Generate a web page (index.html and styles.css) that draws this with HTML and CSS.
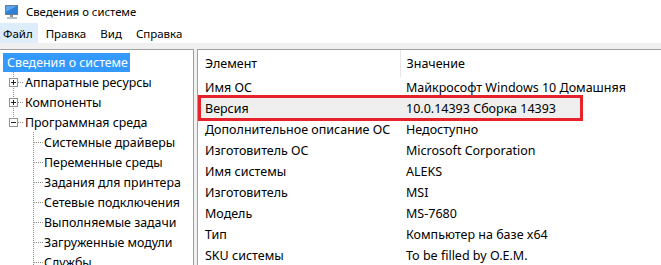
FILE: index.html
```html
<!DOCTYPE html>
<html lang="ru">
<head>
    <meta charset="UTF-8">
    <title>Сведения о системе</title>
    <link rel="stylesheet" href="styles.css">
</head>
<body>
    <div class="titlebar">
        <svg class="app-icon" width="16" height="16" viewBox="0 0 16 16">
            <rect x="1" y="1" width="13" height="10" fill="#6b7a8c"/>
            <rect x="2" y="2" width="11" height="8" fill="#2f7fd8"/>
            <path d="M2 2h11L2 8z" fill="#5aa7f0"/>
            <rect x="6" y="11" width="3" height="2" fill="#8c959f"/>
            <rect x="3" y="13" width="10" height="2" fill="#b7bec6"/>
        </svg>
        <span class="title">Сведения о системе</span>
    </div>

    <div class="menubar">
        <span class="menu active">Файл</span>
        <span class="menu">Правка</span>
        <span class="menu">Вид</span>
        <span class="menu">Справка</span>
    </div>

    <div class="main">
        <div class="tree">
            <div class="node root"><span class="sel">Сведения о системе</span></div>

            <div class="node">
                <span class="gut mid"><span class="box plus"></span></span>
                <span class="label">Аппаратные ресурсы</span>
            </div>
            <div class="node">
                <span class="gut mid"><span class="box plus"></span></span>
                <span class="label">Компоненты</span>
            </div>
            <div class="node">
                <span class="gut last"><span class="box minus"></span></span>
                <span class="label">Программная среда</span>
            </div>

            <div class="node"><span class="gut2"></span><span class="label">Системные драйверы</span></div>
            <div class="node"><span class="gut2"></span><span class="label">Переменные среды</span></div>
            <div class="node"><span class="gut2"></span><span class="label">Задания для принтера</span></div>
            <div class="node"><span class="gut2"></span><span class="label">Сетевые подключения</span></div>
            <div class="node"><span class="gut2"></span><span class="label">Выполняемые задачи</span></div>
            <div class="node"><span class="gut2"></span><span class="label">Загруженные модули</span></div>
            <div class="node"><span class="gut2"></span><span class="label">Службы</span></div>
        </div>

        <div class="list">
            <table>
                <colgroup>
                    <col class="c-name">
                    <col class="c-value">
                    <col>
                </colgroup>
                <thead>
                    <tr>
                        <th class="col-name">Элемент</th>
                        <th>Значение</th>
                        <th></th>
                    </tr>
                </thead>
                <tbody>
                    <tr><td>Имя ОС</td><td>Майкрософт Windows 10 Домашняя</td><td></td></tr>
                    <tr class="selected"><td>Версия</td><td>10.0.14393 Сборка 14393</td><td></td></tr>
                    <tr><td>Дополнительное описание ОС</td><td>Недоступно</td><td></td></tr>
                    <tr><td>Изготовитель ОС</td><td>Microsoft Corporation</td><td></td></tr>
                    <tr><td>Имя системы</td><td>ALEKS</td><td></td></tr>
                    <tr><td>Изготовитель</td><td>MSI</td><td></td></tr>
                    <tr><td>Модель</td><td>MS-7680</td><td></td></tr>
                    <tr><td>Тип</td><td>Компьютер на базе x64</td><td></td></tr>
                    <tr><td>SKU системы</td><td>To be filled by O.E.M.</td><td></td></tr>
                </tbody>
            </table>
            <div class="mark"></div>
        </div>
    </div>
</body>
</html>
```

FILE: styles.css
```css
html, body {
    margin: 0;
    height: 100%;
    overflow: hidden;
}

body {
    font-family: "Noto Sans", "Open Sans", sans-serif;
    font-size: 12px;
    color: #000000;
    background-color: #ffffff;
}

.titlebar {
    display: flex;
    align-items: center;
    height: 23px;
    padding-left: 4px;
}

.app-icon {
    margin-right: 6px;
}

.title {
    font-size: 11.3px;
}

.menubar {
    display: flex;
    height: 20px;
    align-items: stretch;
    font-size: 11.5px;
}

.menu {
    display: flex;
    align-items: center;
    padding: 0 7px;
}

.menu:first-child {
    padding-left: 3px;
    padding-right: 5px;
    margin-right: 1px;
}

.menu.active {
    background-color: #ddedfb;
}

.main {
    display: flex;
    gap: 3px;
    background-color: #f0f0f0;
    padding-top: 6px;
    height: 300px;
}

/* left tree */
.tree {
    width: 194px;
    flex: none;
    background-color: #ffffff;
    border-top: 1px solid #a0a0a0;
    border-right: 1px solid #a0a0a0;
    box-sizing: border-box;
    padding-top: 2px;
    font-size: 12.4px;
}

.node {
    display: flex;
    align-items: center;
    height: 20px;
    white-space: nowrap;
}

.root .sel {
    margin-left: 3px;
    padding: 0 2px 0 4px;
    line-height: 19px;
    background-color: #3399ff;
    color: #ffffff;
}

.gut, .gut2 {
    flex: none;
    height: 100%;
    display: flex;
    align-items: center;
    background-repeat: no-repeat;
}

.gut {
    width: 25px;
    background-image:
        repeating-linear-gradient(to bottom, #8a8a8a 0 1px, transparent 1px 2px),
        repeating-linear-gradient(to right, #8a8a8a 0 1px, transparent 1px 2px);
    background-size: 1px 100%, 6px 1px;
    background-position: 13px 0, 18px 10px;
}

.gut.last {
    background-size: 1px 10px, 6px 1px;
}

.gut2 {
    width: 44px;
    background-image:
        repeating-linear-gradient(to bottom, #8a8a8a 0 1px, transparent 1px 2px),
        repeating-linear-gradient(to right, #8a8a8a 0 1px, transparent 1px 2px);
    background-size: 1px 100%, 10px 1px;
    background-position: 33px 0, 34px 10px;
}

.box {
    width: 9px;
    height: 9px;
    margin-left: 9px;
    box-sizing: border-box;
    border: 1px solid #919191;
    background-color: #ffffff;
    background-repeat: no-repeat;
}

.box.plus {
    background-image: linear-gradient(#222222, #222222), linear-gradient(#222222, #222222);
    background-size: 5px 1px, 1px 5px;
    background-position: 1px 3px, 3px 1px;
}

.box.minus {
    background-image: linear-gradient(#222222, #222222);
    background-size: 5px 1px;
    background-position: 1px 3px;
}

/* right list */
.list {
    position: relative;
    flex: 1;
    background-color: #ffffff;
    border-top: 1px solid #a0a0a0;
    border-left: 1px solid #a0a0a0;
    font-size: 12.5px;
}

table {
    border-collapse: collapse;
    table-layout: fixed;
    width: 100%;
}

.c-name {
    width: 202px;
}

.c-value {
    width: 183px;
}

th {
    font-weight: normal;
    text-align: left;
    height: 27px;
    padding: 0 0 0 7px;
}

th.col-name {
    border-right: 1px solid #e5e5e5;
}

th + th {
    padding-left: 6px;
}

td {
    height: 21px;
    padding: 0 0 0 7px;
    white-space: nowrap;
    overflow: visible;
}

td + td {
    padding-left: 6px;
}

tr.selected td {
    background-color: #efefef;
}

tr.selected td:last-child {
    background-color: transparent;
}

.mark {
    position: absolute;
    left: 0;
    top: 45px;
    width: 385px;
    height: 26px;
    box-sizing: border-box;
    border: 3px solid #e8222b;
}
```
